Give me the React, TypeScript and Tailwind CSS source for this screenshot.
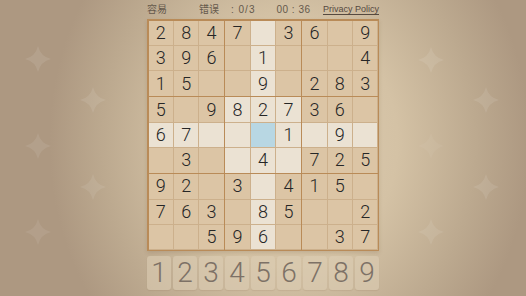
import React from 'react';

// 0 = empty cell
const GRID: number[][] = [
  [2, 8, 4, 7, 0, 3, 6, 0, 9],
  [3, 9, 6, 0, 1, 0, 0, 0, 4],
  [1, 5, 0, 0, 9, 0, 2, 8, 3],
  [5, 0, 9, 8, 2, 7, 3, 6, 0],
  [6, 7, 0, 0, 0, 1, 0, 9, 0],
  [0, 3, 0, 0, 4, 0, 7, 2, 5],
  [9, 2, 0, 3, 0, 4, 1, 5, 0],
  [7, 6, 3, 0, 8, 5, 0, 0, 2],
  [0, 0, 5, 9, 6, 0, 0, 3, 7],
];

const SEL_ROW = 4;
const SEL_COL = 4;

const STARS = [
  { x: 38, y: 59, o: 'opacity-[0.09]' },
  { x: 93, y: 100, o: 'opacity-[0.09]' },
  { x: 38, y: 146, o: 'opacity-[0.08]' },
  { x: 93, y: 187, o: 'opacity-[0.08]' },
  { x: 38, y: 232, o: 'opacity-[0.07]' },
  { x: 431, y: 60, o: 'opacity-[0.09]' },
  { x: 486, y: 100, o: 'opacity-[0.09]' },
  { x: 431, y: 146, o: 'opacity-[0.04]' },
  { x: 486, y: 187, o: 'opacity-[0.09]' },
  { x: 431, y: 232, o: 'opacity-[0.08]' },
];

const Sparkle: React.FC<{ x: number; y: number; o: string }> = ({ x, y, o }) => (
  <svg
    className={`absolute ${o}`}
    width="28"
    height="28"
    viewBox="-14 -14 28 28"
    style={{ left: x - 14, top: y - 14 }}
  >
    <path d="M0,-13 Q2.5,-2.5 13,0 Q2.5,2.5 0,13 Q-2.5,2.5 -13,0 Q-2.5,-2.5 0,-13 Z" fill="#ffffff" />
  </svg>
);

function cellBg(r: number, c: number) {
  if (r === SEL_ROW && c === SEL_COL) return 'bg-[#b8d7e3]';
  const sameBox = Math.floor(r / 3) === Math.floor(SEL_ROW / 3) && Math.floor(c / 3) === Math.floor(SEL_COL / 3);
  if (r === SEL_ROW || c === SEL_COL || sameBox) return 'bg-[#ebe2d3]';
  return 'bg-[#dcc5a5]';
}

export default function App() {
  return (
    <div
      className="relative w-[526px] h-[296px] overflow-hidden bg-[radial-gradient(ellipse_240px_280px_at_55%_48%,#ddccb1_0%,#d4c2a5_45%,#bca98f_78%,#ad9881_100%)]"
      style={{ fontFamily: '"Liberation Sans", "Noto Sans CJK SC", sans-serif' }}
    >
      {STARS.map((s, i) => (
        <Sparkle key={i} {...s} />
      ))}

      <div className="relative mx-auto w-[232px] flex flex-col">
        {/* status bar */}
        <div className="h-[19px] flex items-center text-[10px] text-[#65594c] leading-none">
          <span>容易</span>
          <span className="ml-[32px]">错误</span>
          <span className="ml-[12px] tracking-[1px]">: 0/3</span>
          <span className="ml-[21px] tracking-[0.5px]">00 : 36</span>
          <span className="ml-auto text-[9px] text-[#55493f] underline underline-offset-2">Privacy Policy</span>
        </div>

        {/* board */}
        <div className="h-[232px] grid grid-cols-3 grid-rows-3 gap-[1.5px] p-[1.5px] bg-[#b98b58] shadow-[0_2px_4px_rgba(90,60,30,0.15)]">
          {[0, 1, 2].map(br =>
            [0, 1, 2].map(bc => (
              <div key={`${br}-${bc}`} className="grid grid-cols-3 grid-rows-3 gap-[1px] bg-[#ccb08c]">
                {[0, 1, 2].map(ir =>
                  [0, 1, 2].map(ic => {
                    const r = br * 3 + ir;
                    const c = bc * 3 + ic;
                    const v = GRID[r][c];
                    return (
                      <div
                        key={`${ir}-${ic}`}
                        className={`flex items-center justify-center text-[18px] font-light text-[#262626] leading-none ${cellBg(r, c)}`}
                        style={{ fontFamily: 'Roboto, "Liberation Sans", sans-serif' }}
                      >
                        {v ? v : ''}
                      </div>
                    );
                  })
                )}
              </div>
            ))
          )}
        </div>

        {/* number pad */}
        <div className="mt-[5px] h-[34px] grid grid-cols-9 gap-[2px]">
          {[1, 2, 3, 4, 5, 6, 7, 8, 9].map(n => (
            <div
              key={n}
              className="flex items-center justify-center rounded-[3px] bg-[#dccdb4]/60 shadow-[0_1px_1px_rgba(120,90,60,0.12)] text-[28px] font-light text-[#7d7166] leading-none"
              style={{ fontFamily: 'Roboto, "Liberation Sans", sans-serif' }}
            >
              {n}
            </div>
          ))}
        </div>
      </div>
    </div>
  );
}
